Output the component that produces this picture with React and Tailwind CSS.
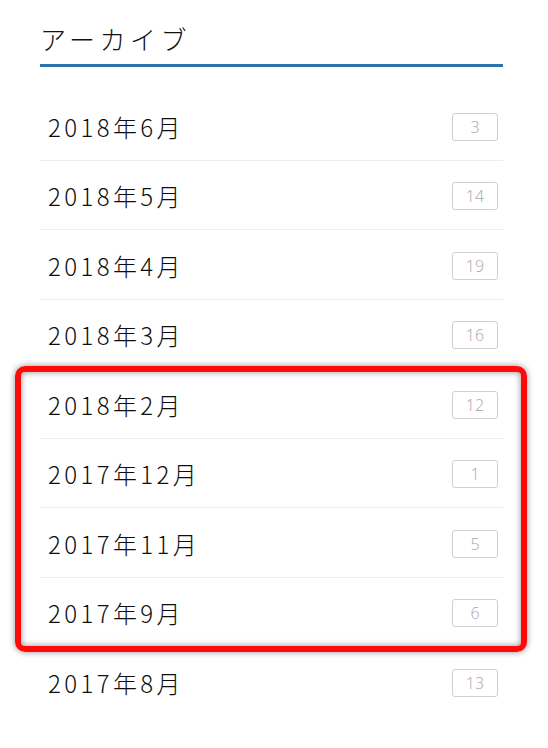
import React from "react";

const months = [
    {label: "2018年6月", count: 3},
    {label: "2018年5月", count: 14},
    {label: "2018年4月", count: 19},
    {label: "2018年3月", count: 16},
    {label: "2018年2月", count: 12},
    {label: "2017年12月", count: 1},
    {label: "2017年11月", count: 5},
    {label: "2017年9月", count: 6},
    {label: "2017年8月", count: 13},
];

const ArchiveRow = ({label, count}) => (
    <li className="flex items-center justify-between h-[69.5px] border-b border-[#eeeeee] last:border-b-0 pl-2 pr-[5px]">
        <span className="text-[24px] font-light tracking-[3.4px] text-[#0e0e0e] pt-[3px]">{label}</span>
        <span className="flex items-center justify-center w-[46px] h-[28px] mt-[3px] border-[1.5px] border-[#cfcfcf] rounded-[3px] text-[16px] font-light text-[#a8a8a8] font-['Open_Sans',sans-serif]">
            {count}
        </span>
    </li>
);

export default function App() {
    return (
        <div className="relative w-[548px] h-[748px] bg-white overflow-hidden font-['Noto_Sans_CJK_JP','Noto_Sans',sans-serif]">
            <div className="ml-10 w-[463px]">
                <h2 className="h-[67px] pt-[21px] border-b-[3px] border-[#2b73aa] text-[26px] font-light tracking-[4.5px] text-[#111] leading-[36px]">
                    アーカイブ
                </h2>
                <ul className="mt-6">
                    {months.map((m) => (
                        <ArchiveRow key={m.label} label={m.label} count={m.count} />
                    ))}
                </ul>
            </div>

            <div className="absolute left-[15px] top-[366px] w-[512px] h-[286px] border-[6px] border-[#ff0a0a] rounded-[10px] shadow-[0_0_6px_rgba(0,0,0,0.45),inset_0_0_6px_rgba(0,0,0,0.45)] pointer-events-none" />
        </div>
    );
}
